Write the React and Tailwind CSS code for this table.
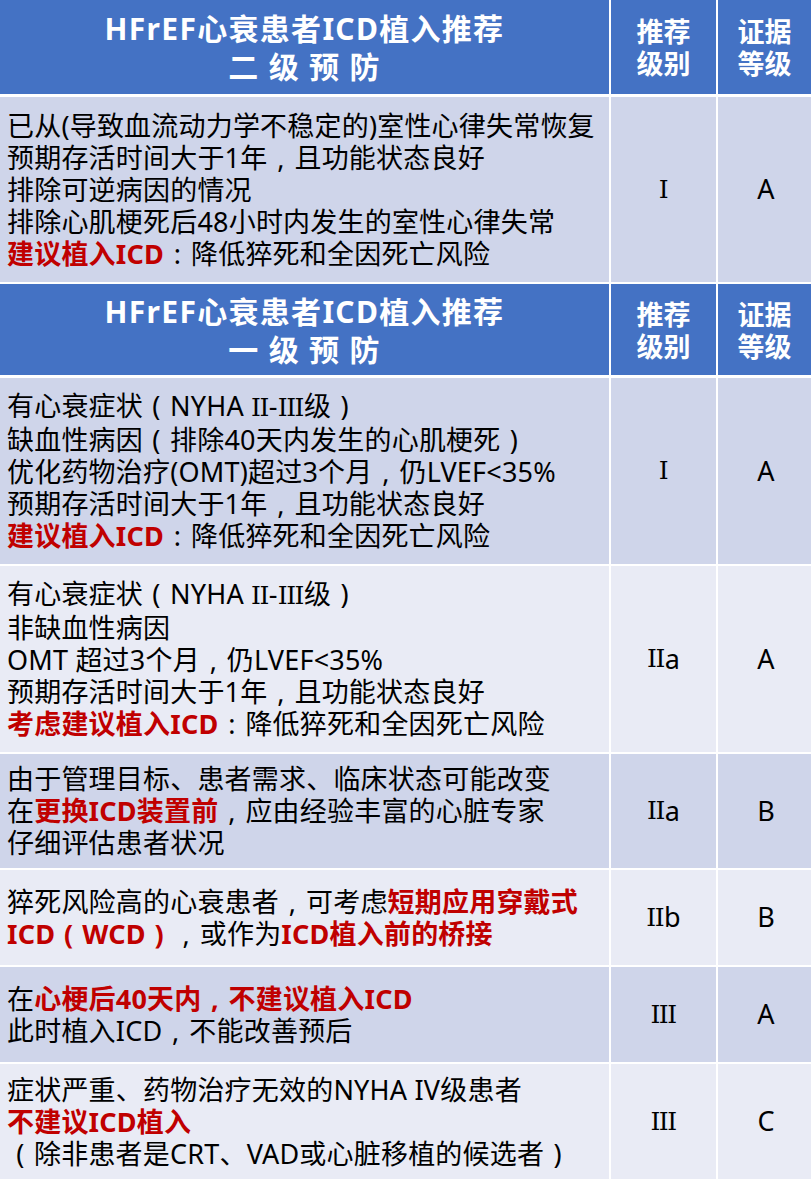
import React from "react";

const FONT = { fontFamily: '"Noto Sans", "Noto Sans CJK SC", sans-serif' };

const Punc = ({ ch }) => (
  <span className="inline-block w-[27px] text-center">{ch}</span>
);

// Render full-width comma / colon centered in their em box, as in the reference
function t(str) {
  const parts = [];
  let buf = "";
  let k = 0;
  for (const c of str) {
    if (c === "，" || c === "：") {
      if (buf) parts.push(buf);
      buf = "";
      parts.push(<Punc key={k++} ch={c === "，" ? "," : ":"} />);
    } else buf += c;
  }
  if (buf) parts.push(buf);
  return parts;
}

const R = ({ children }) => (
  <span className="font-bold text-[#C00000]">{children}</span>
);

const Rn = ({ children }) => (
  <span
    className="tracking-[-1.5px] text-[25px] mr-[1px]"
    style={{ fontFamily: '"DejaVu Serif", serif' }}
  >
    {children}
  </span>
);

const PL = () => <span className="inline-block w-[27px] text-center">(</span>;
const PR = () => <span className="inline-block w-[27px] text-center">)</span>;

function Header({ h, second }) {
  return (
    <div className={`grid grid-cols-[609px_105px_93px] gap-x-[2px] ${h}`}>
      <div className="bg-[#4472C4] flex flex-col items-center justify-center text-white font-bold text-[30px] leading-[38px] tracking-[1.3px] pt-[2px]">
        <div>HFrEF心衰患者ICD植入推荐</div>
        <div className="whitespace-pre">{second}</div>
      </div>
      <div className="bg-[#4472C4] flex flex-col items-center justify-center text-white font-bold text-[27px] leading-[32px] pt-[2px]">
        <div>推荐</div>
        <div>级别</div>
      </div>
      <div className="bg-[#4472C4] flex flex-col items-center justify-center text-white font-bold text-[27px] leading-[32px] pt-[2px]">
        <div>证据</div>
        <div>等级</div>
      </div>
    </div>
  );
}

function Row({ h, bg, lines, c2, c3 }) {
  return (
    <div className={`grid grid-cols-[609px_105px_93px] gap-x-[2px] ${h}`}>
      <div className={`${bg} flex flex-col justify-center pl-[7px] text-[27px] leading-[32px] text-black whitespace-nowrap tracking-[0.2px]`}>
        {lines.map((l, i) => (
          <div key={i}>{typeof l === "string" ? t(l) : l}</div>
        ))}
      </div>
      <div className={`${bg} flex items-center justify-center text-[27px] text-black`}>
        {c2}
      </div>
      <div className={`${bg} flex items-center justify-center text-[27px] text-black pl-[3px]`}>
        {c3}
      </div>
    </div>
  );
}

export default function App() {
  const dark = "bg-[#CFD5EA]";
  const light = "bg-[#E9EBF5]";
  return (
    <div className="w-[811px] h-[1179px] bg-white overflow-hidden flex flex-col" style={FONT}>
      <Header h="h-[94px]" second="二 级 预 防" />
      <div className="h-[3px]" />
      <Row
        h="h-[185px]"
        bg={dark}
        lines={[
          "已从(导致血流动力学不稳定的)室性心律失常恢复",
          "预期存活时间大于1年，且功能状态良好",
          "排除可逆病因的情况",
          "排除心肌梗死后48小时内发生的室性心律失常",
          <>
            <R>建议植入ICD</R>
            {t("：降低猝死和全因死亡风险")}
          </>,
        ]}
        c2={<Rn>I</Rn>}
        c3="A"
      />
      <div className="h-[2px]" />
      <Header h="h-[91px]" second="一 级 预 防" />
      <div className="h-[3px]" />
      <Row
        h="h-[186px]"
        bg={dark}
        lines={[
          <>
            有心衰症状<PL />NYHA <Rn>II</Rn>-<Rn>III</Rn>级<PR />
          </>,
          <>
            缺血性病因<PL />排除40天内发生的心肌梗死<PR />
          </>,
          "优化药物治疗(OMT)超过3个月，仍LVEF<35%",
          "预期存活时间大于1年，且功能状态良好",
          <>
            <R>建议植入ICD</R>
            {t("：降低猝死和全因死亡风险")}
          </>,
        ]}
        c2={<Rn>I</Rn>}
        c3="A"
      />
      <div className="h-[2px]" />
      <Row
        h="h-[186px]"
        bg={light}
        lines={[
          <>
            有心衰症状<PL />NYHA <Rn>II</Rn>-<Rn>III</Rn>级<PR />
          </>,
          "非缺血性病因",
          "OMT 超过3个月，仍LVEF<35%",
          "预期存活时间大于1年，且功能状态良好",
          <>
            <R>考虑建议植入ICD</R>
            {t("：降低猝死和全因死亡风险")}
          </>,
        ]}
        c2={
          <>
            <Rn>II</Rn>a
          </>
        }
        c3="A"
      />
      <div className="h-[2px]" />
      <Row
        h="h-[114px]"
        bg={dark}
        lines={[
          "由于管理目标、患者需求、临床状态可能改变",
          <>
            在<R>更换ICD装置前</R>
            {t("，应由经验丰富的心脏专家")}
          </>,
          "仔细评估患者状况",
        ]}
        c2={
          <>
            <Rn>II</Rn>a
          </>
        }
        c3="B"
      />
      <div className="h-[2px]" />
      <Row
        h="h-[95px]"
        bg={light}
        lines={[
          <>
            {t("猝死风险高的心衰患者，可考虑")}
            <R>短期应用穿戴式</R>
          </>,
          <>
            <R>
              ICD<PL />WCD<PR />
            </R>
            {t("，或作为")}
            <R>ICD植入前的桥接</R>
          </>,
        ]}
        c2={
          <>
            <Rn>II</Rn>b
          </>
        }
        c3="B"
      />
      <div className="h-[2px]" />
      <Row
        h="h-[95px]"
        bg={dark}
        lines={[
          <>
            在<R>{t("心梗后40天内，不建议植入ICD")}</R>
          </>,
          "此时植入ICD，不能改善预后",
        ]}
        c2={<Rn>III</Rn>}
        c3="A"
      />
      <div className="h-[2px]" />
      <Row
        h="h-[115px]"
        bg={light}
        lines={[
          "症状严重、药物治疗无效的NYHA IV级患者",
          <>
            <R>不建议ICD植入</R>
          </>,
          <>
            <PL />除非患者是CRT、VAD或心脏移植的候选者<PR />
          </>,
        ]}
        c2={<Rn>III</Rn>}
        c3="C"
      />
    </div>
  );
}
